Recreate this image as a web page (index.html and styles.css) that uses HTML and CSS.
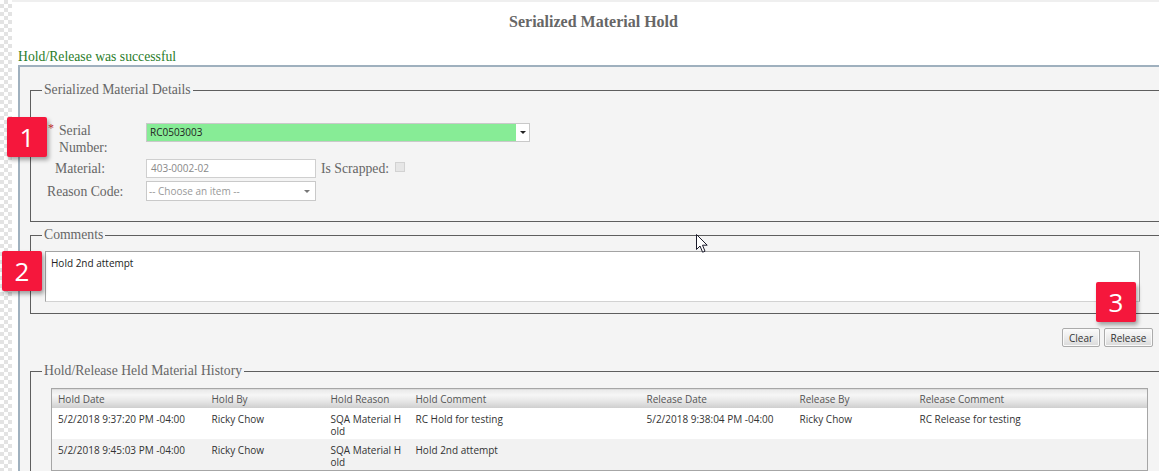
FILE: index.html
```html
<!DOCTYPE html>
<html lang="en">
<head>
<meta charset="utf-8">
<title>Serialized Material Hold</title>
<link rel="stylesheet" href="styles.css">
</head>
<body>
<div class="page">
  <div class="checker"></div>
  <div class="main">
    <h1 class="title">Serialized Material Hold</h1>
    <div class="msg">Hold/Release was successful</div>
    <div class="panel">
      <fieldset class="group details">
        <legend>Serialized Material Details</legend>
        <div class="form">
          <div class="label label-serial"><span class="req">*</span><span class="serial-text">Serial Number:</span></div>
          <div class="field field-serial">
            <div class="combo combo-green"><span class="combo-text">RC0503003</span><span class="combo-btn"><span class="caret"></span></span></div>
          </div>
          <div class="label label-material">Material:</div>
          <div class="field">
            <div class="textbox">403-0002-02</div>
            <span class="inline-label">Is Scrapped:</span>
            <span class="check"></span>
          </div>
          <div class="label label-reason">Reason Code:</div>
          <div class="field">
            <div class="combo combo-reason"><span class="combo-text placeholder">-- Choose an item --</span><span class="caret caret-gray"></span></div>
          </div>
        </div>
      </fieldset>
      <fieldset class="group comments">
        <legend>Comments</legend>
        <div class="textarea">Hold 2nd attempt</div>
      </fieldset>
      <div class="actions">
        <button class="btn btn-clear">Clear</button>
        <button class="btn btn-release">Release</button>
      </div>
      <fieldset class="group history">
        <legend>Hold/Release Held Material History</legend>
        <table class="grid">
          <colgroup>
            <col class="c1"><col class="c2"><col class="c3"><col class="c4"><col class="c5"><col class="c6"><col class="c7">
          </colgroup>
          <thead>
            <tr><th>Hold Date</th><th>Hold By</th><th>Hold Reason</th><th>Hold Comment</th><th>Release Date</th><th>Release By</th><th>Release Comment</th></tr>
          </thead>
          <tbody>
            <tr><td>5/2/2018 9:37:20 PM -04:00</td><td>Ricky Chow</td><td class="reason">SQA Material Hold</td><td>RC Hold for testing</td><td>5/2/2018 9:38:04 PM -04:00</td><td>Ricky Chow</td><td>RC Release for testing</td></tr>
            <tr class="alt"><td>5/2/2018 9:45:03 PM -04:00</td><td>Ricky Chow</td><td class="reason">SQA Material Hold</td><td>Hold 2nd attempt</td><td></td><td></td><td></td></tr>
          </tbody>
        </table>
      </fieldset>
    </div>
  </div>
</div>
<div class="badge badge-1">1</div>
<div class="badge badge-2">2</div>
<div class="badge badge-3">3</div>
<svg class="cursor" width="13" height="20" viewBox="0 0 13 20" aria-hidden="true">
  <path d="M0.5 0.5 L0.5 15.5 L4 12 L6.6 18.2 L9 17.2 L6.5 11.2 L11.2 11.2 Z" fill="#fff" stroke="#1a1a2a" stroke-width="1" stroke-linejoin="round"/>
</svg>
</body>
</html>
```
FILE: styles.css
```css
html, body {
  margin: 0;
  overflow: hidden;
  background: #fff;
}
body {
  position: relative;
  width: 1159px;
  height: 471px;
  font-family: "Liberation Serif", "Times New Roman", serif;
}
.page {
  display: flex;
  height: 471px;
}
.checker {
  flex: none;
  width: 12px;
  background: repeating-conic-gradient(#e3e3e3 0 25%, #ffffff 0 50%) 0 0 / 8px 8px;
}
.main {
  flex: 1;
  min-width: 0;
  border-top: 2px solid #efefef;
  overflow: hidden;
}
.title {
  margin: 10px 0 0;
  padding-left: 16px;
  text-align: center;
  font-size: 16px;
  line-height: 20px;
  font-weight: bold;
  color: #666;
}
.msg {
  margin: 16px 0 0 6px;
  font-size: 13.7px;
  line-height: 17px;
  color: #2a7d2a;
}
.panel {
  margin-left: 6px;
  width: 1220px;
  min-height: 520px;
  border-top: 2px solid #9fb0be;
  border-left: 2px solid #9fb0be;
  background: #f4f4f4;
  padding: 0 0 0 10px;
}
.group {
  margin: 15px 0 0;
  padding: 24px 0 20px 14px;
  border: 1px solid #5e5e5e;
  min-width: 0;
}
.group legend {
  font-size: 13.7px;
  line-height: 16px;
  color: #666;
  padding: 0 2px;
  margin-left: -3px;
}
.form {
  display: grid;
  grid-template-columns: 101px 1fr;
  row-gap: 3px;
  align-items: center;
}
.label {
  font-size: 13.7px;
  line-height: 17px;
  color: #666;
}
.label-serial {
  display: flex;
  align-self: start;
  padding-left: 3px;
}
.req {
  color: #c83232;
  width: 11px;
  font-size: 12px;
  line-height: 13px;
}
.serial-text {
  width: 56px;
}
.label-material { padding-left: 10px; }
.label-reason { padding-left: 2px; }
.field {
  display: flex;
  align-items: center;
}
.field-serial {
  align-self: start;
  margin-top: 1px;
}
.combo {
  box-sizing: border-box;
  display: flex;
  align-items: center;
  border: 1px solid #c9c9c9;
  font-family: "Open Sans", "Liberation Sans", sans-serif;
  font-size: 10px;
  color: #222;
}
.combo-green {
  width: 384px;
  height: 19px;
  background: #87ec96;
}
.combo-text {
  flex: 1;
  padding-left: 3px;
  line-height: 17px;
}
.combo-btn {
  align-self: stretch;
  width: 13px;
  background: #fff;
  display: flex;
  align-items: center;
  justify-content: center;
}
.caret {
  width: 0;
  height: 0;
  border-left: 3px solid transparent;
  border-right: 3px solid transparent;
  border-top: 3px solid #222;
}
.combo-reason {
  width: 170px;
  height: 20px;
  background: #fff;
  padding-right: 5px;
}
.placeholder {
  color: #999;
  padding-left: 2px;
}
.caret-gray {
  border-top-color: #777;
}
.textbox {
  box-sizing: border-box;
  width: 170px;
  height: 19px;
  border: 1px solid #cfcfcf;
  background: #fff;
  padding-left: 4px;
  font-family: "Open Sans", "Liberation Sans", sans-serif;
  font-size: 10px;
  line-height: 17px;
  color: #888;
}
.inline-label {
  margin-left: 5px;
  font-size: 13.7px;
  line-height: 17px;
  color: #666;
}
.check {
  box-sizing: border-box;
  width: 10px;
  height: 10px;
  margin-left: 6px;
  margin-top: -4px;
  border: 1px solid #d2d2d2;
  background: #e6e6e6;
}
.comments {
  margin-top: 5px;
  padding: 8px 0 11px 14px;
}
.textarea {
  box-sizing: border-box;
  width: 1095px;
  height: 51px;
  border: 1px solid #a3a3a3;
  border-bottom-color: #d2d2d2;
  background: #fff;
  padding: 4px 5px;
  font-family: "Open Sans", "Liberation Sans", sans-serif;
  font-size: 10px;
  line-height: 14px;
  color: #222;
}
.actions {
  width: 1123px;
  display: flex;
  justify-content: flex-end;
  gap: 4px;
  margin-top: 14px;
}
.btn {
  height: 19px;
  padding: 0;
  border: 1px solid #ababab;
  border-radius: 2px;
  background: linear-gradient(#fbfbfb, #ececec 50%, #dadada);
  box-shadow: inset 0 0 0 1px #fafafa;
  font-family: "Open Sans", "Liberation Sans", sans-serif;
  font-size: 10px;
  color: #333;
}
.btn-clear { width: 38px; }
.btn-release { width: 49px; }
.history {
  margin-top: 16px;
  padding: 9px 0 0 14px;
}
.grid {
  margin-left: 6px;
  width: 1096px;
  table-layout: fixed;
  border-collapse: collapse;
  border: 1px solid #a6a6a6;
  font-family: "Open Sans", "Liberation Sans", sans-serif;
  font-size: 10px;
  color: #333;
}
.c1 { width: 154px; }
.c2 { width: 119px; }
.c3 { width: 85px; }
.c4 { width: 231px; }
.c5 { width: 153px; }
.c6 { width: 120px; }
.c7 { width: 234px; }
.grid th {
  height: 19px;
  padding: 0 6px;
  text-align: left;
  font-weight: normal;
  color: #555;
  background: linear-gradient(#e9e9e9 0%, #f6f6f6 30%, #e4e4e4 65%, #cdcdcd 100%);
}
.grid tbody tr {
  height: 31px;
  background: #fff;
}
.grid tbody tr.alt {
  background: #f2f2f2;
}
.grid td {
  padding: 5px 6px 2px;
  line-height: 12px;
  vertical-align: top;
}
.grid td.reason {
  word-break: break-all;
}
.badge {
  position: absolute;
  width: 40px;
  height: 40px;
  background: #f5173c;
  color: #fff;
  border-radius: 2px;
  box-shadow: 2px 3px 4px rgba(0, 0, 0, 0.35);
  font-family: "Open Sans", "Liberation Sans", sans-serif;
  font-size: 26px;
  line-height: 40px;
  text-align: center;
}
.badge-1 { left: 7px; top: 117px; }
.badge-2 { left: 2px; top: 251px; }
.badge-3 { left: 1096px; top: 282px; }
.cursor {
  position: absolute;
  left: 696px;
  top: 234px;
}
```
